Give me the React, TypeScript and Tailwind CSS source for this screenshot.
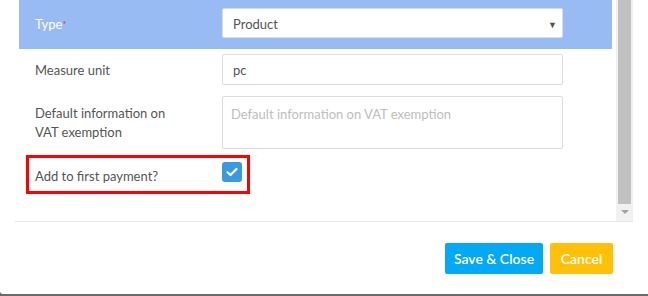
import React from "react";

function Row({ label, children, tall }: { label: React.ReactNode; children: React.ReactNode; tall?: boolean }) {
  return (
    <div className="mx-[4px] flex items-start">
      <div className={`w-[203px] pl-[16px] text-[13px] leading-[19px] text-[#555] ${tall ? "pt-[8px]" : "pt-[7px]"}`}>{label}</div>
      {children}
    </div>
  );
}

export default function App() {
  return (
    <div className="w-[648px] h-[296px] overflow-hidden bg-[#6b6b6b]" style={{ fontFamily: "Lato, 'Liberation Sans', sans-serif" }}>
      <div className="h-[294px] bg-white rounded-bl-[3px]">
        {/* modal body with scrollbar */}
        <div className="ml-[15px] w-[618px] h-[222px] flex border-b border-[#e6e6e6]">
          <div className="flex-1 flex flex-col">
            <div className="mx-[4px] h-[49px] bg-[#99bbf4] flex items-start">
              <div className="w-[203px] pl-[16px] pt-[15px] text-[13px] leading-[19px] text-white">
                Type<sup className="text-[#e53935] text-[10px] relative -top-[1px]">*</sup>
              </div>
              <div className="mt-[8px] w-[341px] h-[30px] bg-white border border-[#dcdcdc] rounded-[2px] flex items-center justify-between pl-[10px] pr-[5px] pt-[3px]">
                <span className="text-[13px] text-[#555]">Product</span>
                <span className="text-[9px] text-[#555]">▼</span>
              </div>
            </div>

            <div className="mt-[5px]">
              <Row label="Measure unit">
                <div className="w-[341px] h-[31px] border border-[#dcdcdc] rounded-[2px] flex items-center pl-[10px] pt-[2px] text-[13px] text-[#555]">pc</div>
              </Row>
            </div>

            <div className="mt-[11px]">
              <Row label={<>Default information on<br />VAT exemption</>} tall>
                <div className="w-[341px] h-[53px] border border-[#dcdcdc] rounded-[2px] pl-[8px] pt-[8px] text-[13px] leading-[19px] text-[#bdbdbd]">
                  Default information on VAT exemption
                </div>
              </Row>
            </div>

            <div className="mt-[6px] ml-[11px] w-[224px] h-[39px] border-[3px] border-[#ff0000] flex items-start">
              <div className="w-[193px] pl-[6px] pt-[9px] text-[13px] leading-[19px] text-[#555]">Add to first payment?</div>
              <div className="mt-[4px] w-[20px] h-[20px] rounded-[3px] bg-[#3b99e0] flex items-center justify-center">
                <svg width="12" height="10" viewBox="0 0 12 10" fill="none">
                  <path d="M1.5 5.2 L4.5 8 L10.5 2" stroke="white" strokeWidth="2.2" strokeLinecap="round" strokeLinejoin="round" />
                </svg>
              </div>
            </div>
          </div>

          {/* scrollbar */}
          <div className="w-[17px] h-[221px] bg-[#f1f1f1] flex flex-col items-center">
            <div className="w-[13px] h-[204px] bg-[#c1c1c1]" />
            <div className="mt-[6px] w-0 h-0 border-l-[4px] border-r-[4px] border-t-[4px] border-l-transparent border-r-transparent border-t-[#a3a3a3]" />
          </div>
        </div>

        {/* footer */}
        <div className="flex justify-end gap-[7px] pt-[21px] pr-[35px]">
          <button className="w-[98px] h-[31px] rounded-[2px] bg-[#03a9f4] text-white text-[14px] font-semibold">Save &amp; Close</button>
          <button className="w-[63px] h-[31px] rounded-[2px] bg-[#ffc107] text-white text-[14px] font-semibold">Cancel</button>
        </div>
      </div>
    </div>
  );
}
